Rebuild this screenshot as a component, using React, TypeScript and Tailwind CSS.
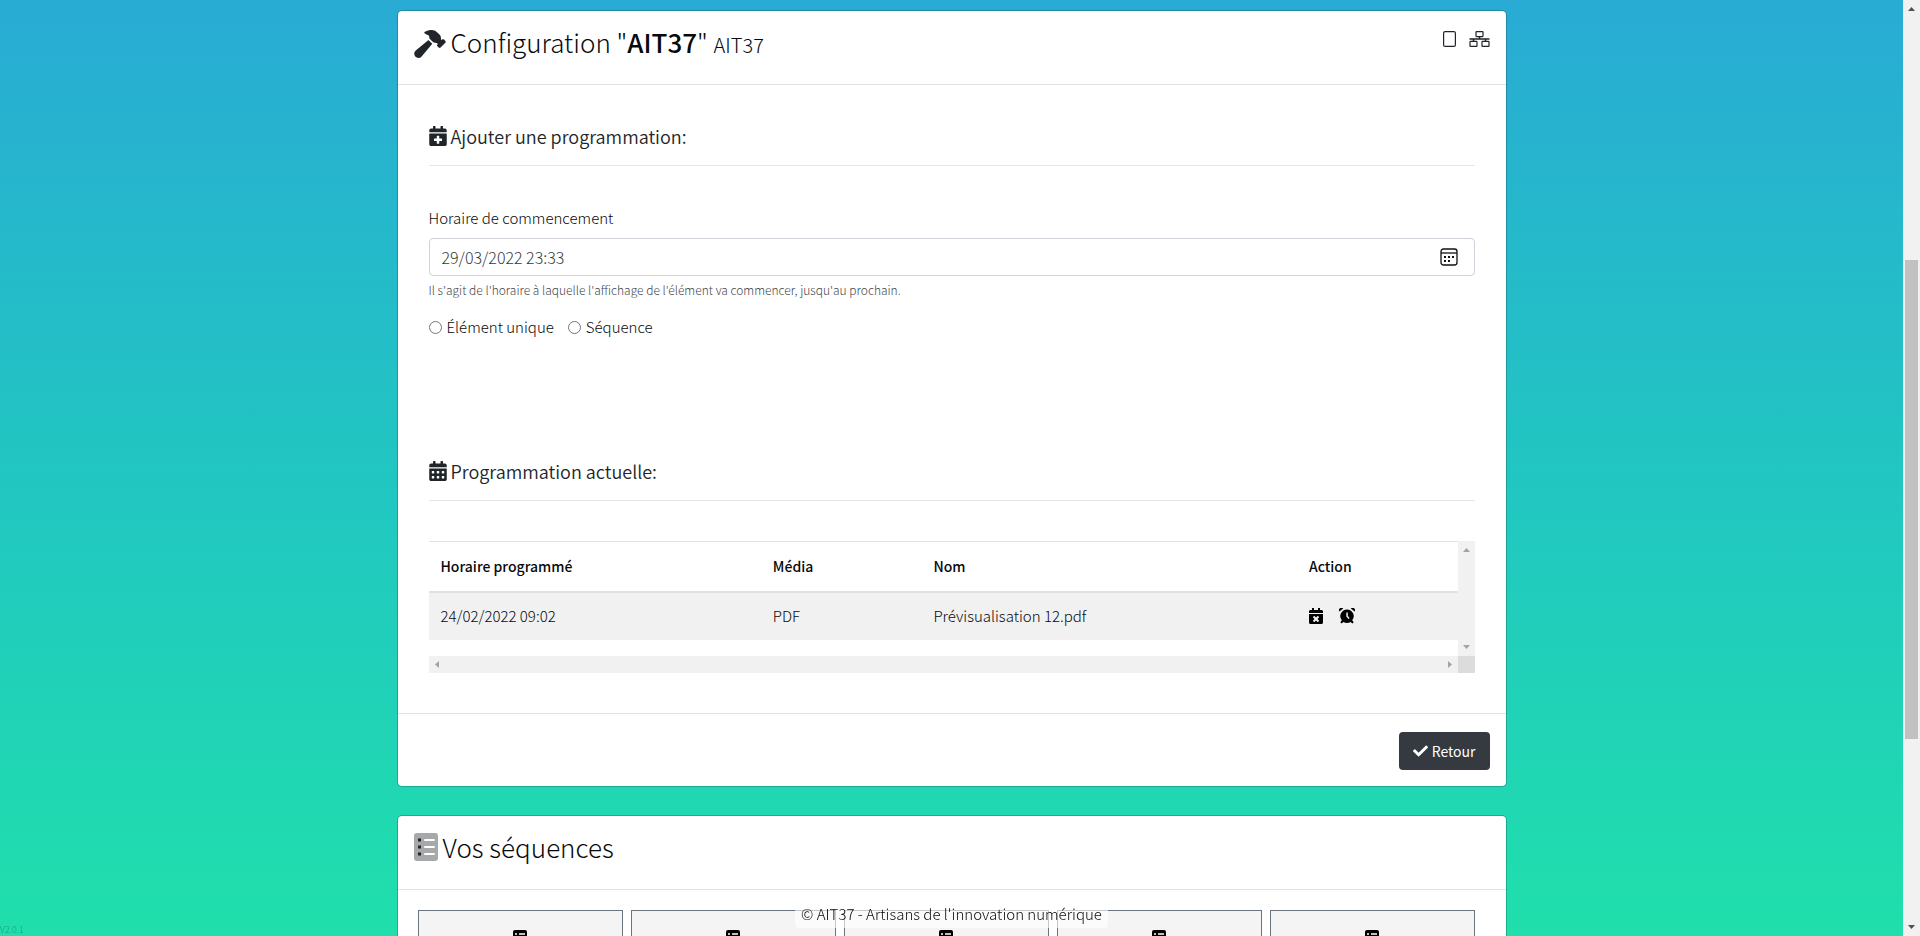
import type { ReactNode } from "react";
import { FaCalendarPlus, FaCalendarAlt, FaCalendarTimes, FaCheck } from "react-icons/fa";
import { FaHammer } from "react-icons/fa6";

function TabletIcon() {
  return (
    <svg className="h-4 w-[13px]" viewBox="0 0 13 16" fill="none" stroke="#212529" strokeWidth="1.2">
      <rect x="0.6" y="0.6" width="11.8" height="14.8" rx="1.5" />
    </svg>
  );
}

function NetworkIcon() {
  return (
    <svg className="h-4 w-[21px]" viewBox="0 0 21 16" fill="none" stroke="#212529" strokeWidth="1.2">
      <rect x="7" y="0.6" width="7" height="5" rx="0.5" />
      <rect x="1" y="10.4" width="7" height="5" rx="0.5" />
      <rect x="13" y="10.4" width="7" height="5" rx="0.5" />
      <path d="M10.5 6v2M4.5 8v2M16.5 8v2M0.5 8h20" strokeWidth="1.5" />
    </svg>
  );
}

function PickerIcon() {
  return (
    <svg className="h-[18px] w-[18px]" viewBox="0 0 18 18" fill="none" stroke="#111" strokeWidth="1.3">
      <rect x="1" y="1" width="16" height="16" rx="2.5" />
      <path d="M1 5h16" />
      <path d="M4 9h2M8 9h2M12 9h2M4 13h2M8 13h2" strokeWidth="2" />
    </svg>
  );
}

function AlarmIcon() {
  return (
    <svg className="h-4 w-4" viewBox="0 0 16 16" fill="#000">
      <path d="M0.4 3.4A2.4 2.4 0 0 1 4.2 0.5ZM15.6 3.4A2.4 2.4 0 0 0 11.8 0.5Z" />
      <path fillRule="evenodd" d="M8 1.4a6.7 6.7 0 0 1 5.2 10.9l1.5 1.9-1.3 1.4-1.8-1.7a6.7 6.7 0 0 1-7.2 0l-1.8 1.7-1.3-1.4 1.5-1.9A6.7 6.7 0 0 1 8 1.4ZM7.3 4.4v4.2l2.2 2.4 1.1-1-1.8-2V4.4Z" />
    </svg>
  );
}

function ListIcon() {
  return (
    <svg className="h-7 w-6" viewBox="0 0 24 28">
      <rect width="24" height="28" rx="3" fill="#a6a8a9" />
      <path d="M4 7h3M4 14h3M4 21h3" stroke="#212529" strokeWidth="3" />
      <path d="M11 7h9M11 14h9M11 21h9" stroke="#fff" strokeWidth="2" strokeLinecap="round" />
    </svg>
  );
}

function TileIcon() {
  return (
    <svg className="h-4 w-[14px]" viewBox="0 0 14 16">
      <rect width="14" height="16" rx="2" />
      <path d="M2 4h2M6 4h6M2 8h2M6 8h6M2 12h2M6 12h6" stroke="#fff" strokeWidth="1.5" />
    </svg>
  );
}

function Arrow({ d, color }: { d: string; color: string }) {
  return (
    <svg className="h-[17px] w-[17px]" viewBox="0 0 17 17" fill={color}>
      <path d={d} />
    </svg>
  );
}

const UP = "M5 11h7L8.5 7Z";
const DOWN = "M5 6h7L8.5 10Z";
const LEFT = "M10 5v7L6 8.5Z";
const RIGHT = "M7 5v7L11 8.5Z";

function Card({ title, tools, children }: { title: ReactNode; tools?: ReactNode; children: ReactNode }) {
  return (
    <section className="rounded-[5px] border border-black/20 bg-white bg-clip-padding">
      <header className="flex h-[74px] items-start justify-between border-b border-[#dee2e6] px-4 pt-[15px]">
        <h3 className="flex items-center gap-[5px] text-[26px] leading-8">{title}</h3>
        {tools}
      </header>
      {children}
    </section>
  );
}

function SectionTitle({ icon, children }: { icon: ReactNode; children: ReactNode }) {
  return (
    <h4 className="flex items-center gap-1 border-b border-black/10 pb-[17px] font-['Noto_Sans_CJK_JP_DemiLight','Noto_Sans_CJK_JP',sans-serif] text-lg leading-6 font-[350] text-[#212529]">
      {icon}
      {children}
    </h4>
  );
}

export default function App() {
  return (
    <div className="flex h-screen overflow-hidden bg-linear-to-b from-[#29abd4] to-[#20dfab] font-['Noto_Sans_CJK_JP','Noto_Sans',sans-serif] text-[15px] leading-6 font-light text-[#080a0c]">
      <main className="min-w-0 flex-1">
        <div className="mx-auto flex max-w-[1140px] flex-col gap-7 px-[15px] pt-[10px]">
          <Card
            title={
              <>
                <FaHammer className="h-7 w-8 text-[#212529]" />
                <span>
                  Configuration "<b className="font-medium">AIT37</b>" <small className="text-[20px]">AIT37</small>
                </span>
              </>
            }
            tools={
              <div className="flex gap-[13px] pt-[5px]">
                <button aria-label="Tablette"><TabletIcon /></button>
                <button aria-label="Réseau"><NetworkIcon /></button>
              </div>
            }
          >
            <div className="px-[31px] pt-[39px] pb-10">
              <SectionTitle icon={<FaCalendarPlus className="h-5 w-[18px]" />}>Ajouter une programmation:</SectionTitle>
              <form className="pt-10">
                <label htmlFor="start" className="block">Horaire de commencement</label>
                <div className="mt-2 flex h-[38px] items-center rounded border border-[#ced4da] pr-4 pl-3">
                  <input id="start" defaultValue="29/03/2022 23:33" className="min-w-0 flex-1 text-base text-[#343a40] outline-none" />
                  <button type="button" aria-label="Choisir une date"><PickerIcon /></button>
                </div>
                <p className="mt-1 text-[12px] leading-5 text-[#3f474e]">
                  Il s'agit de l'horaire à laquelle l'affichage de l'élément va commencer, jusqu'au prochain.
                </p>
                <div className="mt-[15px] flex gap-[14px]">
                  <label className="flex items-center gap-[5px]">
                    <input type="radio" name="kind" className="h-[13px] w-[13px]" />
                    Élément unique
                  </label>
                  <label className="flex items-center gap-[5px]">
                    <input type="radio" name="kind" className="h-[13px] w-[13px]" />
                    Séquence
                  </label>
                </div>
              </form>
              <div className="pt-[120px]">
                <SectionTitle icon={<FaCalendarAlt className="h-5 w-[18px]" />}>Programmation actuelle:</SectionTitle>
              </div>
              <div className="mt-10 grid grid-cols-[1fr_17px]">
                <div className="pb-4">
                  <table className="w-full table-fixed border-collapse text-left">
                    <thead>
                      <tr className="h-[50px] border-t border-b-2 border-[#dee2e6]">
                        <th className="w-[32.3%] px-3 text-sm font-medium">Horaire programmé</th>
                        <th className="w-[15.6%] px-3 text-sm font-medium">Média</th>
                        <th className="w-[36.5%] px-3 text-sm font-medium">Nom</th>
                        <th className="px-3 text-sm font-medium">Action</th>
                      </tr>
                    </thead>
                    <tbody>
                      <tr className="h-12 bg-[#f1f1f1]">
                        <td className="px-3">24/02/2022 09:02</td>
                        <td className="px-3">PDF</td>
                        <td className="px-3">Prévisualisation 12.pdf</td>
                        <td className="px-3">
                          <div className="flex items-center gap-4 text-black">
                            <button aria-label="Supprimer"><FaCalendarTimes className="h-4 w-[14px]" /></button>
                            <button aria-label="Reprogrammer"><AlarmIcon /></button>
                          </div>
                        </td>
                      </tr>
                    </tbody>
                  </table>
                </div>
                <div className="flex flex-col justify-between bg-[#f1f1f1]">
                  <Arrow d={UP} color="#a3a3a3" />
                  <Arrow d={DOWN} color="#a3a3a3" />
                </div>
                <div className="flex justify-between bg-[#f1f1f1]">
                  <Arrow d={LEFT} color="#a3a3a3" />
                  <Arrow d={RIGHT} color="#a3a3a3" />
                </div>
                <div className="bg-[#dcdcdc]" />
              </div>
            </div>
            <footer className="flex justify-end border-t border-[#dee2e6] px-4 pt-[18px] pb-4">
              <button className="flex h-[38px] items-center gap-1 rounded bg-[#343a40] px-[14px] text-sm font-normal text-white">
                <FaCheck className="h-4 w-[15px]" />
                Retour
              </button>
            </footer>
          </Card>
          <Card
            title={
              <>
                <ListIcon />
                <span>Vos séquences</span>
              </>
            }
          >
            <div className="grid grid-cols-5 gap-2 py-5 pr-[31px] pl-5">
              {[1, 2, 3, 4, 5].map((n) => (
                <button key={n} aria-label={"Séquence " + n} className="flex h-40 justify-center border border-[#6c757d] bg-[#f4f4f4] pt-[19px]">
                  <TileIcon />
                </button>
              ))}
            </div>
          </Card>
        </div>
      </main>
      <div className="flex w-[17px] flex-col items-center bg-[#f1f1f1]">
        <Arrow d={UP} color="#505050" />
        <div className="mt-[243px] h-[479px] w-[13px] bg-[#c1c1c1]" />
        <div className="mt-auto"><Arrow d={DOWN} color="#505050" /></div>
      </div>
      <div className="pointer-events-none fixed inset-x-0 bottom-2 flex justify-center pr-[17px]">
        <p className="rounded bg-white/60 px-[6px] pb-[2px]">© AIT37 - Artisans de l'innovation numérique</p>
      </div>
      <small className="fixed bottom-0 left-0 text-[9px] leading-3 text-black/30">V2.0.1</small>
    </div>
  );
}
